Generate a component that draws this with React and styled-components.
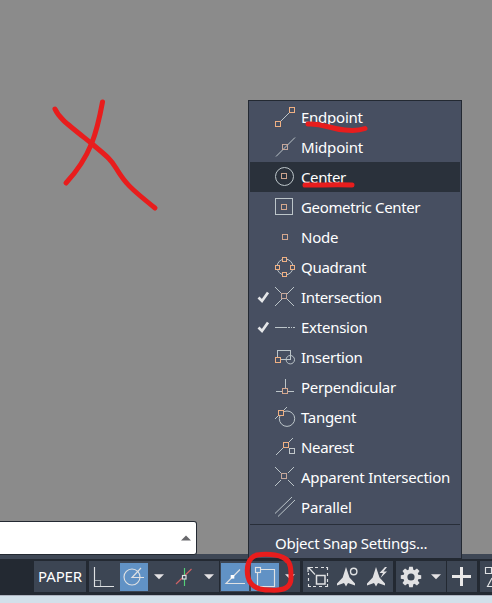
import React from "react";
import styled, { createGlobalStyle } from "styled-components";

const GlobalStyle = createGlobalStyle`
  html, body { margin: 0; padding: 0; overflow: hidden; }
  *, *::before, *::after { box-sizing: border-box; }
`;

const Screen = styled.div`
  position: relative;
  width: 492px;
  height: 603px;
  display: flex;
  flex-direction: column;
  overflow: hidden;
  background: #8b8b8b;
  font-family: "Noto Sans", "Open Sans", sans-serif;
  color: #fff;
`;

const DrawingArea = styled.main`
  flex: 1;
  display: flex;
  align-items: flex-end;
`;

const CommandLine = styled.div`
  width: 197px;
  height: 34px;
  margin-bottom: -1px;
  display: flex;
  align-items: center;
  justify-content: flex-end;
  padding-right: 5px;
  background: #fff;
  border: 1px solid #232932;
  border-left: 0;
  border-radius: 0 3px 3px 0;
  z-index: 1;
`;

const Strip = styled.div`
  height: 5px;
  background: #3e4755;
`;

const StatusBar = styled.footer`
  height: 36px;
  display: flex;
  align-items: flex-start;
  padding: 2px 0 0 34px;
  background: #232932;
`;

const Taskbar = styled.div`
  height: 8px;
  background: #d2e0ea;
  border-top: 1px solid #aeb4c0;
`;

const Group = styled.div`
  flex: none;
  width: ${(p) => p.$width}px;
  height: 31px;
  margin-right: ${(p) => p.$gap ?? 3}px;
  display: flex;
  align-items: center;
  background: #3c4553;
  overflow: hidden;
`;

const PaperLabel = styled.span`
  width: 100%;
  text-align: center;
  font-size: 15px;
  line-height: 31px;
  letter-spacing: -0.15px;
`;

const Tool = styled.button`
  flex: none;
  width: ${(p) => p.$width ?? 28}px;
  height: 28px;
  margin: 0 1px;
  padding: 0;
  border: 0;
  display: flex;
  background: ${(p) => (p.$active ? "#6192c5" : "transparent")};
`;

const Glyph = styled.svg`
  display: block;
  flex: none;
  fill: none;
  stroke: ${(p) => (p.$muted ? "#bcc5c9" : "#dfe1e3")};
  stroke-width: ${(p) => (p.$muted ? 1 : 1.15)};
`;

const Menu = styled.nav`
  position: absolute;
  left: 248px;
  top: 100px;
  width: 214px;
  height: 459px;
  display: flex;
  flex-direction: column;
  padding: 1px;
  background: #474f61;
  border: 1px solid #232932;
  z-index: 2;
`;

const MenuItem = styled.div`
  flex: none;
  height: 30px;
  display: flex;
  align-items: center;
  padding-left: 6px;
  background: ${(p) => (p.$hover ? "#2a313b" : "transparent")};
`;

const CheckSlot = styled.span`
  width: 18px;
  height: 22px;
`;

const ItemLabel = styled.span`
  margin-left: 5px;
  font-size: 15px;
  line-height: 30px;
  letter-spacing: ${(p) => p.$tracking}px;
  white-space: nowrap;
`;

const Divider = styled.hr`
  flex: none;
  width: 100%;
  height: 1px;
  margin: 2px 0 3px;
  border: 0;
  background: #282e39;
`;

const SettingsItem = styled.div`
  flex: none;
  height: 29px;
  padding-left: 25px;
  font-size: 15px;
  line-height: 30px;
  letter-spacing: -0.25px;
  white-space: nowrap;
`;

const Ink = styled.svg`
  position: absolute;
  left: 0;
  top: 0;
  z-index: 3;
  pointer-events: none;
  fill: none;
  stroke: #e81d1d;
  stroke-width: 5;
  stroke-linecap: round;
  stroke-linejoin: round;
`;

const Marker = ({ x, y, size = 5, color = "#d4a78e" }) => (
  <rect x={x + 0.5} y={y + 0.5} width={size} height={size} stroke={color} fill="#474f61" />
);

const ORANGE = "#efb083";

const drawings = {
  endpoint: <><path d="M6 16L16 6" /><Marker x={15} y={1} color={ORANGE} /><Marker x={1} y={15} color={ORANGE} /></>,
  midpoint: <><path d="M2 20.5L21 1.5" /><rect x="8.5" y="8.5" width="5" height="5" stroke="#c5a79b" /></>,
  center: <><circle cx="10.5" cy="10.5" r="9" /><rect x="7.5" y="7.5" width="5" height="5" stroke="#c9a18d" /></>,
  geometric: <><rect x="1.5" y="2.5" width="17" height="16" /><Marker x={7} y={8} /></>,
  node: <Marker x={8} y={8} />,
  quadrant: <><circle cx="11" cy="11" r="8" /><Marker x={8} y={1} size={4} color={ORANGE} /><Marker x={1} y={9} size={4} color={ORANGE} /><Marker x={16} y={9} size={4} color={ORANGE} /><Marker x={8} y={16} size={4} color={ORANGE} /></>,
  intersection: <><path d="M1 1L20 20M20 1L1 20" /><Marker x={7} y={7} color="#c5a79b" /></>,
  extension: <path d="M1 11.5H13M14 11.5H16M17 11.5H18M19 11.5H21" />,
  insertion: <><rect x="3.5" y="4.5" width="13" height="9" /><circle cx="16.3" cy="13.7" r="4.2" /><Marker x={1} y={11} color={ORANGE} /></>,
  perpendicular: <><path d="M11.5 3V12M2 15.5H20" /><Marker x={8} y={12} /></>,
  tangent: <><circle cx="13" cy="12.7" r="7.7" /><path d="M1 13L13 1" /><Marker x={4} y={4} color={ORANGE} /></>,
  nearest: <><path d="M2 19L19 2" /><Marker x={9} y={6} color={ORANGE} /><Marker x={15} y={12} color="#c1c7ca" /></>,
  apparent: <><path d="M1 1L7 7M14 14L20 20M20 1L14 7M7 14L1 20" /><Marker x={7} y={7} color="#c5a79b" /></>,
  parallel: <path d="M1 17.5L18 1M4 20.5L21 4" />,
};

const items = [
  ["endpoint", "Endpoint", -0.25],
  ["midpoint", "Midpoint", -0.2],
  ["center", "Center", -0.4],
  ["geometric", "Geometric Center", -0.35],
  ["node", "Node", -0.2],
  ["quadrant", "Quadrant", -0.3],
  ["intersection", "Intersection", -0.35],
  ["extension", "Extension", -0.25],
  ["insertion", "Insertion", -0.25],
  ["perpendicular", "Perpendicular", -0.3],
  ["tangent", "Tangent", -0.3],
  ["nearest", "Nearest", -0.35],
  ["apparent", "Apparent Intersection", -0.25],
  ["parallel", "Parallel", -0.15],
];
const checked = ["intersection", "extension"];

const Check = () => (
  <Glyph width="18" height="22" viewBox="0 0 18 22">
    <path d="M2.500 11.500L6 15L12 6.500" stroke="#e5e7e9" strokeWidth="2.7" />
  </Glyph>
);

const Caret = ({ width = 20 }) => (
  <Glyph width={width} height="31" viewBox={`${-width / 2} 0 ${width} 31`}>
    <path d="M-5 13.2H5L0 18.2Z" fill="#e4e2e4" stroke="none" />
  </Glyph>
);

const Gear = () => (
  <Glyph width="30" height="28" viewBox="-15 -14 30 28">
    <g fill="#e1e1e3" stroke="none">
      {[0, 45, 90, 135, 180, 225, 270, 315].map((a) => (
        <path key={a} d="M-2.6 -6L-1.8 -10.2H1.8L2.6 -6Z" transform={`rotate(${a})`} />
      ))}
    </g>
    <circle r="5.6" stroke="#e1e1e3" strokeWidth="4" />
  </Glyph>
);

const Compass = ({ children }) => (
  <Glyph width="28" height="28" viewBox="0 0 28 28">
    <path d="M12 4L15.500 14.500L21 20.500V22.500L14 20L12 23.500L10 20L3 22.500V20.500L8.700 14.500Z" fill="#e1e1e3" stroke="none" />
    {children}
  </Glyph>
);

export default function App() {
  return (
    <>
      <GlobalStyle />
      <Screen>
        <DrawingArea>
          <CommandLine>
            <Glyph width="10" height="6" viewBox="0 0 10 6">
              <path d="M0 5.5L5 0.5L10 5.5Z" fill="#68686c" stroke="none" />
            </Glyph>
          </CommandLine>
        </DrawingArea>
        <Strip />
        <StatusBar>
          <Group $width={52}><PaperLabel>PAPER</PaperLabel></Group>
          <Group $width={130} $gap={1}>
            <Tool>
              <Glyph width="28" height="28" viewBox="90 563 28 28">
                <path d="M94.5 567V586.5H114" /><path d="M95 580.5H100.5V586" stroke="#a4abb1" />
              </Glyph>
            </Tool>
            <Tool $active>
              <Glyph width="28" height="28" viewBox="120 563 28 28">
                <circle cx="132" cy="577" r="8" /><path d="M144 577.5H132L141 568" />
              </Glyph>
            </Tool>
            <Caret />
            <Tool>
              <Glyph width="28" height="28" viewBox="170 563 28 28">
                <path d="M176 584L191.5 569" stroke="#cf6265" />
                <path d="M184.5 568V586" stroke="#54cf78" />
                <rect x="182.5" y="575.5" width="3.5" height="3.5" fill="#3c4553" />
              </Glyph>
            </Tool>
            <Caret />
          </Group>
          <Group $width={80}>
            <Tool $active>
              <Glyph width="28" height="28" viewBox="221 563 28 28">
                <path d="M245 583.5H226L240 569.5" />
                <rect x="230.7" y="575" width="3.6" height="3.6" fill="#fff" stroke="none" />
              </Glyph>
            </Tool>
            <Tool $active>
              <Glyph width="28" height="28" viewBox="251 563 28 28">
                <path d="M261 569.5H274.5V586.5H257.5V573" /><rect x="255.5" y="567.5" width="5" height="5" />
              </Glyph>
            </Tool>
            <Caret />
          </Group>
          <Group $width={90}>
            <Tool>
              <Glyph width="28" height="28" viewBox="304 563 28 28">
                <path d="M315 567.5H318M321 567.5H324M326 567.5H327.5V570M327.5 573V576M327.5 579V582M327.5 584V586.5H325M322 586.5H319M316 586.5H313M311 586.5H308.5V584M308.5 581V578M308.5 575V573M308 572V567.5H313M308.5 567.5L315 574.5" />
                <rect x="316.5" y="575.5" width="8.5" height="8.5" strokeWidth="1.5" />
              </Glyph>
            </Tool>
            <Tool><Compass><circle cx="19.7" cy="8.5" r="3.2" strokeWidth="1.4" /></Compass></Tool>
            <Tool><Compass><path d="M21 4L15.500 10H19L16.500 15L23 8.500H19.500L23 4Z" fill="#e1e1e3" stroke="none" /></Compass></Tool>
          </Group>
          <Group $width={50} $gap={1}><Gear /><Caret /></Group>
          <Group $width={30}>
            <Glyph width="30" height="31" viewBox="0 0 30 31">
              <path d="M14.5 6V25M5 15.5H24" stroke="#e9e8e8" strokeWidth="3" />
            </Glyph>
          </Group>
          <Group $width={30}>
            <Glyph width="30" height="31" viewBox="480 561 30 31">
              <path d="M485.5 567.5H491.5V573.5H485.5ZM492 578L487.5 586.5H500" />
            </Glyph>
          </Group>
        </StatusBar>
        <Taskbar />
        <Menu>
          {items.map(([id, label, tracking]) => (
            <MenuItem key={id} $hover={id === "center"}>
              <CheckSlot>{checked.includes(id) && <Check />}</CheckSlot>
              <Glyph $muted width="22" height="22" viewBox="0 0 22 22">{drawings[id]}</Glyph>
              <ItemLabel $tracking={tracking}>{label}</ItemLabel>
            </MenuItem>
          ))}
          <Divider />
          <SettingsItem>Object Snap Settings...</SettingsItem>
        </Menu>
        <Ink width="492" height="603" viewBox="0 0 492 603">
          <path d="M55 109C59 118 66 123 91 143C105 155 110 158 116 168C125 183 130 188 155 208" />
          <path d="M102.5 102C97 132 91 156 66 183" />
          <path d="M308 124C324 123 329 129 345 130C354 131 361 130 365 128.5" />
          <path d="M305 185C318 185.5 333 184 352 185" />
          <path d="M287 561C284 555 268 553 257 555C248 557 246 568 248 577C250 586 258 590 270 590C285 591 291 587 291 578C291 570 291 563 286 559" />
        </Ink>
      </Screen>
    </>
  );
}
